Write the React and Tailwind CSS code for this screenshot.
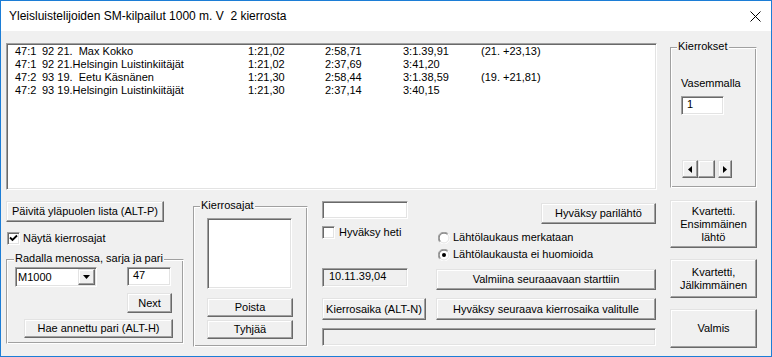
import React from "react";

const RAISED =
  "bg-[#f0f0f0] border border-t-[#e3e3e3] border-l-[#e3e3e3] border-r-[#696969] border-b-[#696969] shadow-[inset_-1px_-1px_0_#a0a0a0,inset_1px_1px_0_#ffffff]";
const SUNKEN =
  "border border-t-[#a0a0a0] border-l-[#a0a0a0] border-r-white border-b-white shadow-[inset_1px_1px_0_#696969,inset_-1px_-1px_0_#e3e3e3]";
const ETCHED =
  "border border-t-[#a0a0a0] border-l-[#a0a0a0] border-r-white border-b-white shadow-[inset_1px_1px_0_#ffffff,inset_-1px_-1px_0_#a0a0a0]";

function Btn({ className = "", children }) {
  return (
    <div
      className={`${RAISED} flex flex-col items-center justify-center text-center leading-[13px] ${className}`}
    >
      {children}
    </div>
  );
}

function Group({ label, className = "", labelLeft = "left-[6px]", children }) {
  return (
    <div className={`relative ${ETCHED} ${className}`}>
      <div
        className={`absolute top-[-8px] ${labelLeft} bg-[#f0f0f0] px-px leading-[13px] whitespace-nowrap`}
      >
        {label}
      </div>
      {children}
    </div>
  );
}

function CheckBox({ checked }) {
  return (
    <div className={`${SUNKEN} w-[13px] h-[13px] bg-white flex items-center justify-center shrink-0`}>
      {checked && (
        <svg width="9" height="9" viewBox="0 0 9 9">
          <path d="M1 3.5 L3.5 6 L8 1.5" stroke="#000" strokeWidth="1.8" fill="none" />
        </svg>
      )}
    </div>
  );
}

function Radio({ checked }) {
  return (
    <svg width="12" height="12" viewBox="0 0 12 12" className="shrink-0">
      <circle cx="6" cy="6" r="5.5" fill="#fff" />
      <path d="M1.8 10.2 A5.5 5.5 0 0 1 10.2 1.8" stroke="#a0a0a0" strokeWidth="1" fill="none" />
      <path d="M10.2 1.8 A5.5 5.5 0 0 1 1.8 10.2" stroke="#ffffff" strokeWidth="1" fill="none" />
      <path d="M2.5 9.5 A4.5 4.5 0 0 1 9.5 2.5" stroke="#696969" strokeWidth="1" fill="none" />
      <path d="M9.5 2.5 A4.5 4.5 0 0 1 2.5 9.5" stroke="#e3e3e3" strokeWidth="1" fill="none" />
      {checked && <circle cx="6" cy="6" r="2" fill="#000" />}
    </svg>
  );
}

const rows = [
  ["47:1", "92 21.", "  Max Kokko", "1:21,02", "2:58,71", "3:1.39,91", "(21. +23,13)"],
  ["47:1", "92 21.", "Helsingin Luistinkiitäjät", "1:21,02", "2:37,69", "3:41,20", ""],
  ["47:2", "93 19.", "  Eetu Käsnänen", "1:21,30", "2:58,44", "3:1.38,59", "(19. +21,81)"],
  ["47:2", "93 19.", "Helsingin Luistinkiitäjät", "1:21,30", "2:37,14", "3:40,15", ""],
];

export default function App() {
  return (
    <div
      className="w-[772px] h-[357px] box-border border border-[#1c7dd6] bg-[#f0f0f0] flex flex-col text-[11px] text-black overflow-hidden"
      style={{ fontFamily: '"Liberation Sans", Arial, sans-serif' }}
    >
      {/* Title bar */}
      <div className="h-[30px] bg-white flex items-center shrink-0">
        <div className="pl-[8px] text-[12px] whitespace-pre">
          Yleisluistelijoiden SM-kilpailut 1000 m. V  2 kierrosta
        </div>
        <div className="ml-auto mr-[10px] mt-[1px]">
          <svg width="11" height="11" viewBox="0 0 11 11">
            <path d="M0.5 0.5 L10.5 10.5 M10.5 0.5 L0.5 10.5" stroke="#000" strokeWidth="1" />
          </svg>
        </div>
      </div>

      {/* Top section */}
      <div className="flex items-start mt-[12px]">
        <div className={`ml-[5px] w-[651px] h-[147px] bg-white ${SUNKEN} pl-[8px] pt-[1px]`}>
          {rows.map((r, i) => (
            <div key={i} className="flex leading-[13px] whitespace-pre">
              <div className="w-[233px] flex">
                <span className="w-[27px]">{r[0]}</span>
                <span>{r[1]}</span>
                <span>{r[2]}</span>
              </div>
              <div className="w-[77px]">{r[3]}</div>
              <div className="w-[78px]">{r[4]}</div>
              <div className="w-[78px]">{r[5]}</div>
              <div>{r[6]}</div>
            </div>
          ))}
        </div>
        <Group label="Kierrokset" className="ml-[13px] mt-[4px] w-[87px] h-[141px] pl-[10px]">
          <div className="mt-[29px] leading-[13px]">Vasemmalla</div>
          <div className={`${SUNKEN} bg-white mt-[6px] w-[43px] h-[19px] pl-[5px] leading-[15px]`}>1</div>
          <div className="mt-[45px] ml-px flex h-[18px]">
            <div className={`${RAISED} w-[16px] flex items-center justify-center`}>
              <svg width="4" height="7" viewBox="0 0 4 7">
                <path d="M4 0 L0 3.5 L4 7 Z" fill="#000" />
              </svg>
            </div>
            <div className={`${RAISED} w-[17px]`} />
            <div className="w-[3px] bg-[#e8e8e8]" />
            <div className={`${RAISED} w-[14px] flex items-center justify-center`}>
              <svg width="4" height="7" viewBox="0 0 4 7">
                <path d="M0 0 L4 3.5 L0 7 Z" fill="#000" />
              </svg>
            </div>
          </div>
        </Group>
      </div>

      {/* Bottom section */}
      <div className="flex items-start mt-[10px]">
        {/* Column A */}
        <div className="ml-[5px] w-[178px] mt-px flex flex-col">
          <Btn className="w-[158px] h-[21px]">Päivitä yläpuolen lista (ALT-P)</Btn>
          <div className="mt-[10px] flex items-center h-[13px] ml-px">
            <CheckBox checked />
            <span className="ml-[3px] leading-[13px]">Näytä kierrosajat</span>
          </div>
          <Group
            label="Radalla menossa, sarja ja pari"
            labelLeft="left-[7px]"
            className="mt-[14px] w-[178px] h-[85px] pl-[8px] pt-[7px]"
          >
            <div className="flex items-start">
              <div className={`${SUNKEN} bg-white w-[82px] h-[20px] flex items-stretch p-[1px]`}>
                <span className="pl-[1px] leading-[16px] flex-1">M1000</span>
                <div className={`${RAISED} w-[17px] flex items-center justify-center`}>
                  <svg width="7" height="4" viewBox="0 0 7 4">
                    <path d="M0 0 L7 0 L3.5 4 Z" fill="#000" />
                  </svg>
                </div>
              </div>
              <div className={`${SUNKEN} bg-white ml-[30px] w-[44px] h-[19px] pl-[5px] leading-[15px]`}>47</div>
            </div>
            <Btn className="mt-[6px] ml-[112px] w-[45px] h-[20px]">Next</Btn>
            <Btn className="mt-[6px] ml-[9px] w-[149px] h-[19px]">Hae annettu pari (ALT-H)</Btn>
          </Group>
        </div>

        {/* Column B */}
        <Group
          label="Kierrosajat"
          className="ml-[9px] mt-[6px] w-[115px] h-[141px] pl-[13px] pt-[11px]"
        >
          <div className={`${SUNKEN} bg-white w-[85px] h-[71px]`} />
          <Btn className="mt-[9px] w-[86px] h-[19px]">Poista</Btn>
          <Btn className="mt-[3px] w-[86px] h-[19px]">Tyhjää</Btn>
        </Group>

        {/* Column C */}
        <div className="ml-[14px] w-[334px] flex flex-col">
          <div className="mt-px flex items-start h-[22px]">
            <div className={`${SUNKEN} bg-white w-[86px] h-[18px]`} />
            <Btn className="ml-auto mt-[2px] w-[115px] h-[21px]">Hyväksy parilähtö</Btn>
          </div>
          <div className="flex h-[45px]">
            <div className="w-[116px] flex items-start mt-[3px]">
              <CheckBox />
              <span className="ml-[4px] leading-[13px]">Hyväksy heti</span>
            </div>
            <div className="flex flex-col">
              <div className="mt-[8px] flex items-center h-[13px]">
                <Radio />
                <span className="ml-[3px] leading-[13px]">Lähtölaukaus merkataan</span>
              </div>
              <div className="mt-[4px] flex items-center h-[13px]">
                <Radio checked />
                <span className="ml-[3px] leading-[13px]">Lähtölaukausta ei huomioida</span>
              </div>
            </div>
          </div>
          <div className="flex items-start h-[22px]">
            <div className={`${SUNKEN} w-[86px] h-[19px] pl-[6px] leading-[15px]`}>10.11.39,04</div>
            <Btn className="ml-auto mt-px w-[220px] h-[21px]">Valmiina seuraaavaan starttiin</Btn>
          </div>
          <div className="mt-[8px] flex items-start">
            <Btn className="w-[104px] h-[22px]">Kierrosaika (ALT-N)</Btn>
            <Btn className="ml-auto w-[220px] h-[22px]">Hyväksy seuraava kierrosaika valitulle</Btn>
          </div>
          <div className={`${SUNKEN} mt-[8px] w-[334px] h-[18px]`} />
        </div>

        {/* Column D */}
        <div className="ml-[14px] w-[87px] flex flex-col">
          <Btn className="h-[48px]">
            <span>Kvartetti.</span>
            <span>Ensimmäinen</span>
            <span>lähtö</span>
          </Btn>
          <Btn className="mt-[11px] h-[39px]">
            <span>Kvartetti,</span>
            <span>Jälkimmäinen</span>
          </Btn>
          <Btn className="mt-[11px] h-[39px]">Valmis</Btn>
        </div>
      </div>
    </div>
  );
}
